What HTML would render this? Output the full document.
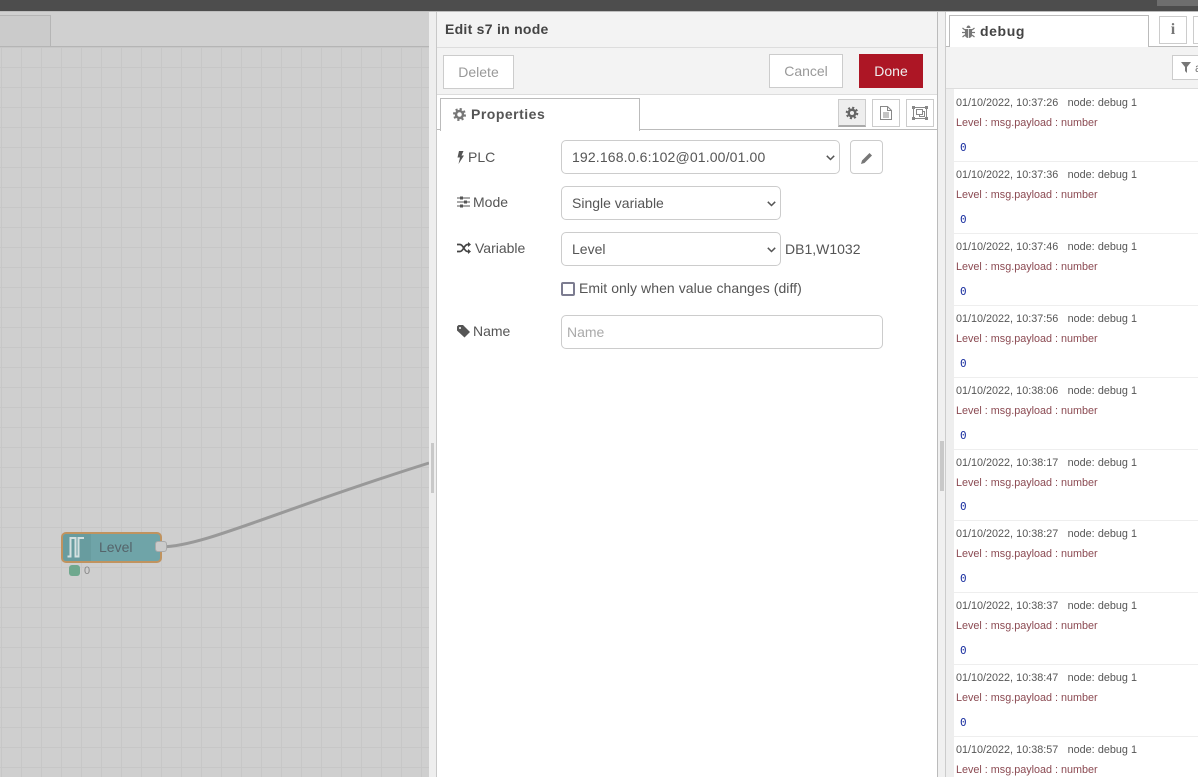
<!DOCTYPE html>
<html><head><meta charset="utf-8"><title>Edit s7 in node</title>
<style>
html,body{margin:0;padding:0}
body{width:1198px;height:777px;overflow:hidden;position:relative;background:#fff;font-family:"Liberation Sans",sans-serif;font-size:14px;color:#555}
.a{position:absolute;box-sizing:border-box}
.t{position:absolute;white-space:nowrap;line-height:16px}
.btn{position:absolute;box-sizing:border-box;background:#fff;border:1px solid #ccc;text-align:center;color:#999;font-size:14px}
.ib{position:absolute;box-sizing:border-box;background:#fff;border:1px solid #ccc}
select,input{position:absolute;box-sizing:border-box;margin:0;font-family:"Liberation Sans",sans-serif;font-size:14px;color:#555;background:#fff;border:1px solid #ccc;border-radius:5px;outline:none}
select{padding:0 0 0 10px;height:34px;appearance:none;-webkit-appearance:none}
input{padding:0 5px;height:34px}
input::placeholder{color:#aaa}
.m{font-size:10.8px;color:#555;word-spacing:.15px}
.r{font-size:10.8px;color:#8b4a52}
.z{font-family:"DejaVu Sans Mono",monospace;font-size:11px;color:#1a2fa0}
.l{position:absolute;left:954px;width:244px;height:1px;background:#eee}
svg{position:absolute;overflow:visible}
</style></head><body>

<!-- top bar -->
<div class="a" style="left:0;top:0;width:1198px;height:11px;background:#4d4d4d"></div>
<div class="a" style="left:1157px;top:0;width:41px;height:6px;background:#6e6e6e"></div>
<div class="a" style="left:0;top:11px;width:1198px;height:1px;background:#bdbdbd"></div>

<!-- workspace -->
<div class="a" style="left:0;top:12px;width:429px;height:35px;background:#d0d0d0;border-bottom:1px solid #b5b5b5"></div>
<div class="a" style="left:-2px;top:15px;width:53px;height:32px;background:#cbcbcb;border:1px solid #b5b5b5"></div>
<div class="a" style="left:0;top:47px;width:429px;height:730px;background-color:#cfcfcf;background-image:linear-gradient(to right,#c7c7c7 1px,transparent 1px),linear-gradient(to bottom,#c7c7c7 1px,transparent 1px);background-size:20px 20px;background-position:1px 0"></div>

<svg style="left:0;top:0" width="429" height="777"><path d="M161 547C205 546 270 513 429 463" fill="none" stroke="#999" stroke-width="3"/></svg>

<!-- node -->
<div class="a" style="left:61px;top:532px;width:101px;height:31px;background:#6fa4a8;border:2px solid #c0935f;border-radius:5px"></div>
<div class="a" style="left:63px;top:534px;width:28px;height:27px;background:#689c9f;border-radius:3px 0 0 3px"></div>
<svg style="left:0;top:0" width="100" height="570"><path d="M67.500 556.500H70.500V538H75.500V556.500H78.500V538H84" fill="none" stroke="#d4e0e0" stroke-width="2"/></svg>
<div class="t" style="left:99px;top:539px;color:#55646a;font-size:14px">Level</div>
<div class="a" style="left:155px;top:541px;width:12px;height:11px;background:#cbcbcb;border:1px solid #aaa;border-radius:3px"></div>
<div class="a" style="left:69px;top:565px;width:11px;height:11px;background:#6fa88e;border-radius:3px"></div>
<div class="t" style="left:84px;top:563px;font-size:11px;color:#888">0</div>

<!-- tray splitter -->
<div class="a" style="left:429px;top:12px;width:8px;height:765px;background:#eee;border-right:1px solid #c8c8c8"></div>
<div class="a" style="left:431px;top:443px;width:3px;height:50px;background:#c8c8c8"></div>

<!-- tray -->
<div class="a" style="left:437px;top:12px;width:500px;height:36px;background:#f3f3f3;border-bottom:1px solid #ddd"></div>
<div class="t" style="left:445px;top:21px;font-weight:bold;color:#444;font-size:14px;letter-spacing:.27px">Edit s7 in node</div>
<div class="a" style="left:437px;top:48px;width:500px;height:47px;background:#f3f3f3;border-bottom:1px solid #ddd"></div>
<div class="btn" style="left:443px;top:55px;width:71px;height:34px;line-height:32px">Delete</div>
<div class="btn" style="left:769px;top:54px;width:74px;height:34px;line-height:32px">Cancel</div>
<div class="btn" style="left:859px;top:54px;width:64px;height:34px;line-height:34px;background:#ad1625;border:none;color:#eee">Done</div>

<div class="a" style="left:437px;top:95px;width:500px;height:35px;background:#fff;border-bottom:1px solid #bbb"></div>
<div class="a" style="left:440px;top:98px;width:200px;height:33px;background:#fff;border:1px solid #bbb;border-bottom:none"></div>
<svg style="left:453px;top:108px" width="13" height="13"><circle cx="6.500" cy="6.500" r="3.500" fill="none" stroke="#777" stroke-width="2.500"/><circle cx="6.500" cy="6.500" r="5.500" fill="none" stroke="#777" stroke-width="2" stroke-dasharray="2.200 2.120"/></svg>
<div class="t" style="left:471px;top:106px;font-weight:bold;color:#555;font-size:14px;letter-spacing:.5px">Properties</div>

<div class="ib" style="left:838px;top:99px;width:28px;height:28px;background:#eee;border-bottom:2px solid #aaa"></div>
<svg style="left:846px;top:107px" width="13" height="13"><circle cx="6" cy="6" r="3.300" fill="none" stroke="#666" stroke-width="2.500"/><circle cx="6" cy="6" r="5.300" fill="none" stroke="#666" stroke-width="2" stroke-dasharray="2.100 2.060"/></svg>
<div class="ib" style="left:872px;top:99px;width:28px;height:28px"></div>
<svg style="left:880px;top:106px" width="12" height="14"><path d="M.5.500H7.500L11.500 4.500V13.500H.5Z M7.500.500V4.500H11.500 M3 7H9M3 9H9M3 11H9" fill="none" stroke="#888" stroke-width="1"/></svg>
<div class="ib" style="left:906px;top:99px;width:28px;height:28px"></div>
<svg style="left:912px;top:106px" width="16" height="14"><path d="M1.500 1.500H14.500V12.500H1.500Z" fill="none" stroke="#888"/><path d="M4.500 3.500H10.500V8.500H4.500ZM7.500 8.500V10.500H12.500V5.500H10.500" fill="none" stroke="#888"/><path d="M0 0h3v3H0zM13 0h3v3h-3zM0 11h3v3H0zM13 11h3v3h-3z" fill="#888"/></svg>

<!-- form -->
<svg style="left:457px;top:151px" width="7" height="13"><path d="M2 0H6.500L4.500 4.500H7L1.500 13 3 6.500H.5Z" fill="#555"/></svg>
<div class="t" style="left:468px;top:149px">PLC</div>
<select style="left:561px;top:140px;width:279px;letter-spacing:.15px"><option>192.168.0.6:102@01.00/01.00</option></select>
<svg style="left:826px;top:155px" width="9" height="6"><path d="M.8.800 4.500 4.500 8.200.800" fill="none" stroke="#555" stroke-width="1.500"/></svg>
<div class="ib" style="left:850px;top:140px;width:33px;height:34px;border-radius:4px"></div>
<svg style="left:861px;top:152px" width="12" height="12"><path d="M0 12 1 8.500 8.500 1 11 3.500 3.500 11Z" fill="#777"/></svg>

<svg style="left:457px;top:196px" width="13" height="12"><path d="M0 2H13M0 6H13M0 10H13" stroke="#555" stroke-width="1"/><path d="M3 .5h3v3H3zM7 4.500h3v3H7zM3 8.500h3v3H3z" fill="#555"/></svg>
<div class="t" style="left:473px;top:194px">Mode</div>
<select style="left:561px;top:186px;width:220px"><option>Single variable</option></select>
<svg style="left:767px;top:201px" width="9" height="6"><path d="M.8.800 4.500 4.500 8.200.800" fill="none" stroke="#555" stroke-width="1.500"/></svg>

<svg style="left:457px;top:242px" width="14" height="12"><path d="M0 2.500H3C6.500 2.500 7 9.500 10.500 9.500H12M0 9.500H3C6.500 9.500 7 2.500 10.500 2.500H12" fill="none" stroke="#444" stroke-width="1.700"/><path d="M11 0 14 2.500 11 5ZM11 7 14 9.500 11 12Z" fill="#444"/></svg>
<div class="t" style="left:475px;top:240px">Variable</div>
<select style="left:561px;top:232px;width:220px"><option>Level</option></select>
<svg style="left:767px;top:247px" width="9" height="6"><path d="M.8.800 4.500 4.500 8.200.800" fill="none" stroke="#555" stroke-width="1.500"/></svg>
<div class="t" style="left:785px;top:241px">DB1,W1032</div>

<div class="a" style="left:561px;top:282px;width:14px;height:14px;background:#fff;border:2px solid #7c7c90;border-radius:2px"></div>
<div class="t" style="left:579px;top:280px;letter-spacing:.06px">Emit only when value changes (diff)</div>

<svg style="left:457px;top:325px" width="13" height="13"><path d="M0 1.500 1.500 0H6L13 7 7.500 12.500 0 5.500Z" fill="#555"/><circle cx="3" cy="3" r="1" fill="#fff"/></svg>
<div class="t" style="left:473px;top:323px">Name</div>
<input style="left:561px;top:315px;width:322px" placeholder="Name">

<!-- sidebar splitter -->
<div class="a" style="left:937px;top:12px;width:9px;height:765px;background:#f0f0f0;border-left:1px solid #bbb;border-right:1px solid #ccc"></div>
<div class="a" style="left:940px;top:441px;width:4px;height:50px;background:#c8c8c8"></div>

<!-- debug -->
<div class="a" style="left:946px;top:12px;width:252px;height:35px;background:#fff;border-bottom:1px solid #bbb"></div>
<div class="a" style="left:949px;top:15px;width:200px;height:32px;background:#fff;border:1px solid #bbb;border-bottom:none"></div>
<svg style="left:962px;top:25px" width="13" height="13"><path d="M3 4H10V10C10 12 8 13 6.500 13S3 12 3 10ZM4.500 3C4.500 1.500 5.500 .5 6.500 .5S8.500 1.500 8.500 3Z" fill="#777"/><path d="M.5 3 3 5M12.500 3 10 5M0 7.500H3M13 7.500H10M.5 12 3 10M12.500 12 10 10" stroke="#777" stroke-width="1.200"/><path d="M6.500 4V13" stroke="#ddd"/></svg>
<div class="t" style="left:980px;top:23px;font-weight:bold;color:#444;font-size:14px;letter-spacing:.6px">debug</div>
<div class="ib" style="left:1159px;top:16px;width:28px;height:28px"></div>
<div class="t" style="left:1159px;top:22px;width:28px;text-align:center;font-family:'Liberation Serif',serif;font-weight:bold;font-size:16px;color:#777">i</div>
<div class="ib" style="left:1193px;top:16px;width:28px;height:28px"></div>

<div class="a" style="left:946px;top:47px;width:252px;height:42px;background:#f3f3f3;border-bottom:1px solid #ddd"></div>
<div class="ib" style="left:1172px;top:55px;width:40px;height:25px;"></div>
<svg style="left:1181px;top:62px" width="10" height="11"><path d="M0 0H10L6 5V11L4 9V5Z" fill="#777"/></svg>
<div class="t" style="left:1195px;top:60px;font-size:12px;color:#777">a</div>

<div class="a" style="left:946px;top:89px;width:8px;height:688px;background:#eee"></div>

<div class="t m" style="left:956px;top:95px">01/10/2022, 10:37:26 &nbsp; node: debug 1</div>
<div class="t r" style="left:956px;top:115px">Level : msg.payload : number</div>
<div class="t z" style="left:960px;top:140px">0</div>
<div class="l" style="top:161px"></div>

<div class="t m" style="left:956px;top:167px">01/10/2022, 10:37:36 &nbsp; node: debug 1</div>
<div class="t r" style="left:956px;top:187px">Level : msg.payload : number</div>
<div class="t z" style="left:960px;top:212px">0</div>
<div class="l" style="top:233px"></div>

<div class="t m" style="left:956px;top:239px">01/10/2022, 10:37:46 &nbsp; node: debug 1</div>
<div class="t r" style="left:956px;top:259px">Level : msg.payload : number</div>
<div class="t z" style="left:960px;top:284px">0</div>
<div class="l" style="top:305px"></div>

<div class="t m" style="left:956px;top:311px">01/10/2022, 10:37:56 &nbsp; node: debug 1</div>
<div class="t r" style="left:956px;top:331px">Level : msg.payload : number</div>
<div class="t z" style="left:960px;top:356px">0</div>
<div class="l" style="top:377px"></div>

<div class="t m" style="left:956px;top:383px">01/10/2022, 10:38:06 &nbsp; node: debug 1</div>
<div class="t r" style="left:956px;top:403px">Level : msg.payload : number</div>
<div class="t z" style="left:960px;top:428px">0</div>
<div class="l" style="top:449px"></div>

<div class="t m" style="left:956px;top:455px">01/10/2022, 10:38:17 &nbsp; node: debug 1</div>
<div class="t r" style="left:956px;top:475px">Level : msg.payload : number</div>
<div class="t z" style="left:960px;top:499px">0</div>
<div class="l" style="top:520px"></div>

<div class="t m" style="left:956px;top:526px">01/10/2022, 10:38:27 &nbsp; node: debug 1</div>
<div class="t r" style="left:956px;top:546px">Level : msg.payload : number</div>
<div class="t z" style="left:960px;top:571px">0</div>
<div class="l" style="top:592px"></div>

<div class="t m" style="left:956px;top:598px">01/10/2022, 10:38:37 &nbsp; node: debug 1</div>
<div class="t r" style="left:956px;top:618px">Level : msg.payload : number</div>
<div class="t z" style="left:960px;top:643px">0</div>
<div class="l" style="top:664px"></div>

<div class="t m" style="left:956px;top:670px">01/10/2022, 10:38:47 &nbsp; node: debug 1</div>
<div class="t r" style="left:956px;top:690px">Level : msg.payload : number</div>
<div class="t z" style="left:960px;top:715px">0</div>
<div class="l" style="top:736px"></div>

<div class="t m" style="left:956px;top:742px">01/10/2022, 10:38:57 &nbsp; node: debug 1</div>
<div class="t r" style="left:956px;top:762px">Level : msg.payload : number</div>

</body></html>
